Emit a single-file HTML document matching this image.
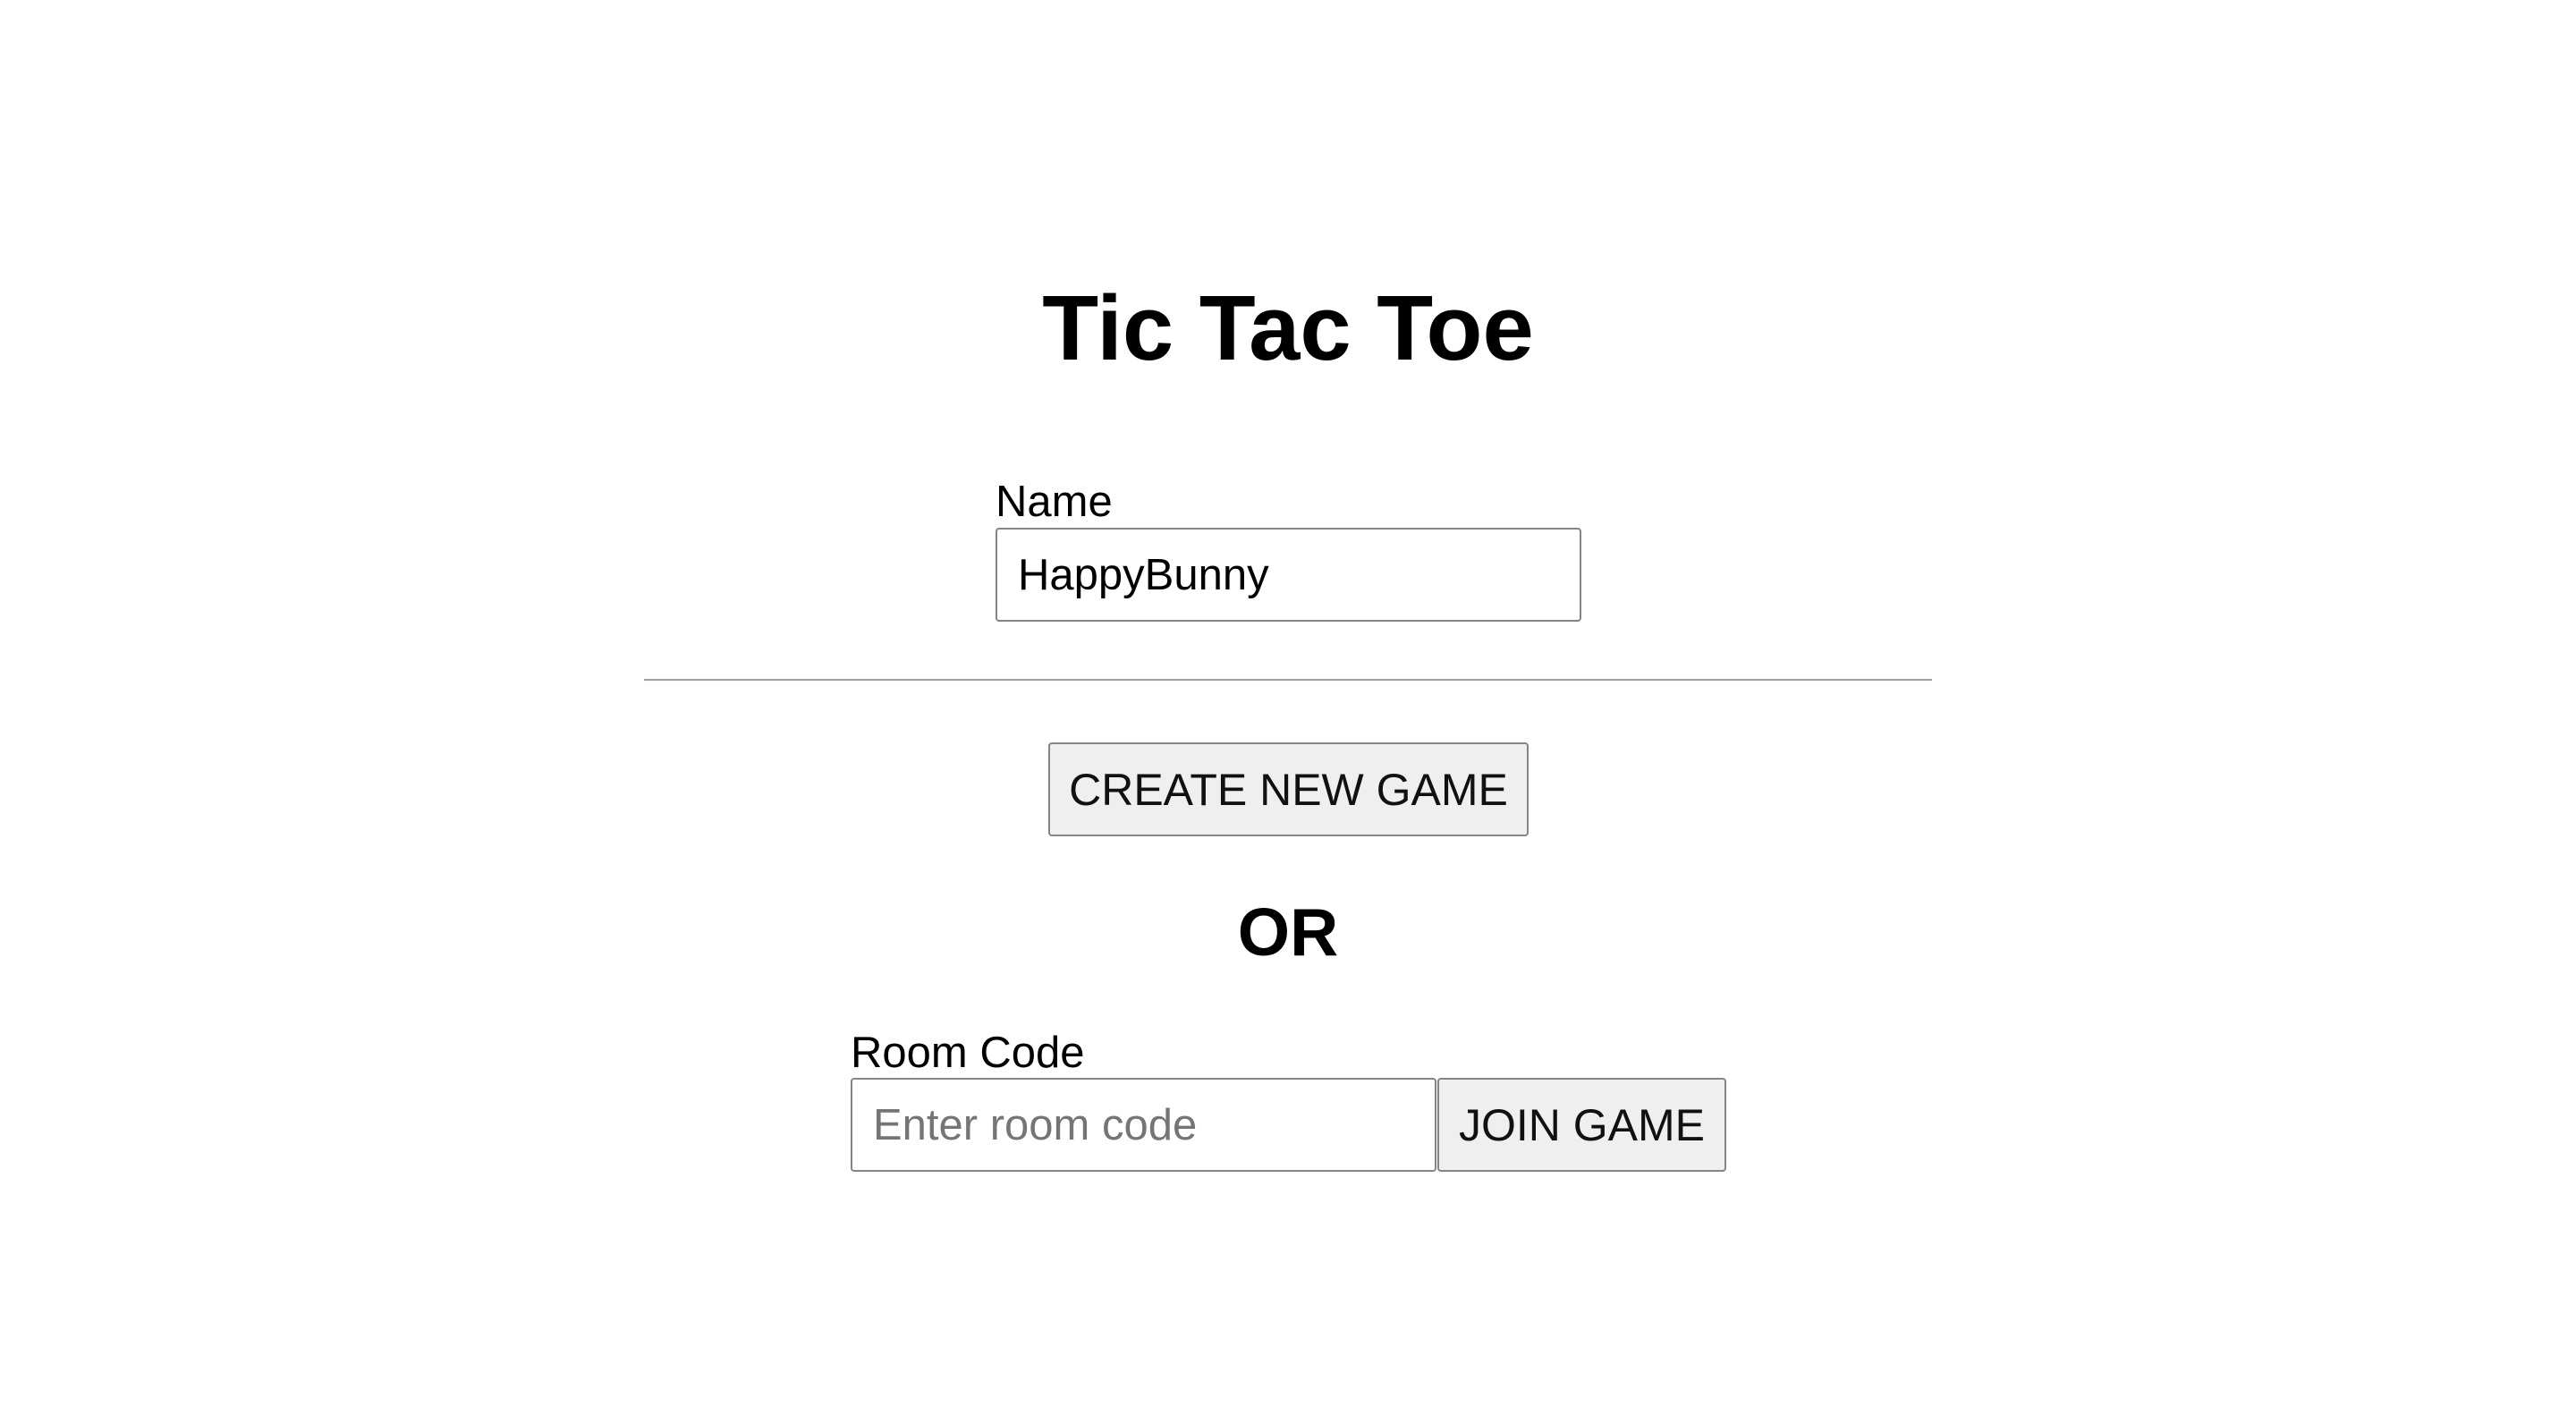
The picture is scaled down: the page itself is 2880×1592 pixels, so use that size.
<!DOCTYPE html>
<html><head><meta charset="utf-8"><style>
html,body{margin:0;padding:0;background:#fff;width:2880px;height:1592px;overflow:hidden;font-family:"Liberation Sans",Arial,sans-serif;color:#000}
.a{position:absolute;white-space:nowrap}
.box{position:absolute;box-sizing:border-box;border:2px solid #858585;border-radius:4px;display:flex;align-items:center}
</style></head><body>
<div class="a" style="left:0;width:2880px;text-align:center;top:302px;font-size:103px;font-weight:bold;line-height:130px">Tic Tac Toe</div>
<div class="a" style="left:1113px;top:531px;font-size:49px;line-height:60px">Name</div>
<div class="box" style="left:1113px;top:590px;width:655px;height:105px;padding-left:23px;font-size:49px">HappyBunny</div>
<div class="a" style="left:720px;top:759px;width:1440px;height:2px;background:#a0a0a0"></div>
<div class="box" style="left:1172px;top:830px;width:537px;height:105px;background:#efefef;justify-content:center;font-size:50px;color:#111">CREATE NEW GAME</div>
<div class="a" style="left:0;width:2880px;text-align:center;top:994px;font-size:75px;font-weight:bold;line-height:96px">OR</div>
<div class="a" style="left:951px;top:1147px;font-size:49px;line-height:60px">Room Code</div>
<div class="box" style="left:951px;top:1205px;width:655px;height:105px;padding-left:23px;font-size:49px;color:#757575">Enter room code</div>
<div class="box" style="left:1607px;top:1205px;width:323px;height:105px;background:#efefef;justify-content:center;font-size:50px;color:#111">JOIN GAME</div>
</body></html>
